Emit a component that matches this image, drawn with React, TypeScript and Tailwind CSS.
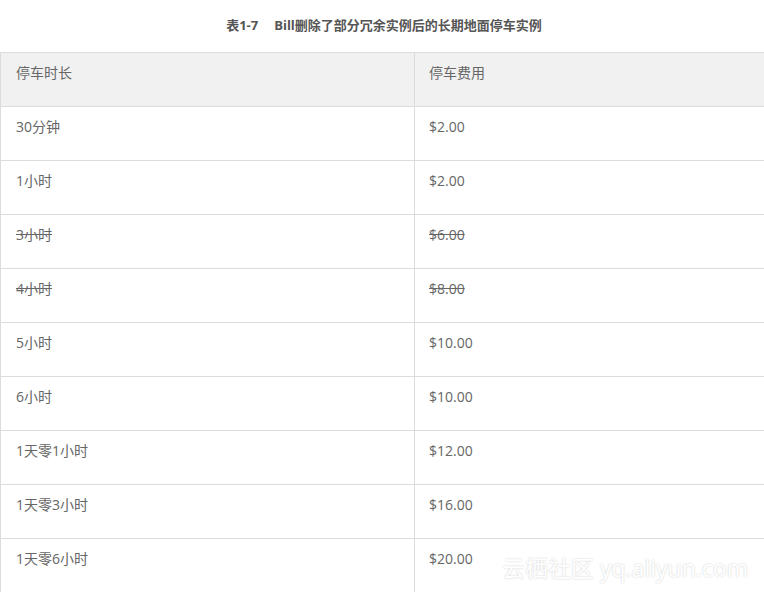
import React from 'react';

const rows: { time: string; fee: string; struck?: boolean }[] = [
  { time: '30分钟', fee: '$2.00' },
  { time: '1小时', fee: '$2.00' },
  { time: '3小时', fee: '$6.00', struck: true },
  { time: '4小时', fee: '$8.00', struck: true },
  { time: '5小时', fee: '$10.00' },
  { time: '6小时', fee: '$10.00' },
  { time: '1天零1小时', fee: '$12.00' },
  { time: '1天零3小时', fee: '$16.00' },
  { time: '1天零6小时', fee: '$20.00' },
];

const font = { fontFamily: '"Open Sans", "Noto Sans CJK SC", sans-serif' };

export default function App() {
  return (
    <div className="relative w-[764px] h-[593px] overflow-hidden bg-white text-[#666]" style={font}>
      <div className="h-[52px] flex items-center justify-center pb-[1px] pl-[4px]">
        <p className="text-[13px] font-bold text-[#555] leading-none">
          表1-7<span className="inline-block w-[16px]" />Bill删除了部分冗余实例后的长期地面停车实例
        </p>
      </div>

      <div className="grid grid-cols-[414px_414px] w-[828px] text-[14px] leading-[22px]">
        <div className="h-[54px] bg-[#f1f1f1] border-t border-l border-[#dcdcdc] pl-[15px] pt-[9px]">停车时长</div>
        <div className="h-[54px] bg-[#f1f1f1] border-t border-l border-[#dcdcdc] pl-[14px] pt-[9px]">停车费用</div>
        {rows.map((r, i) => (
          <React.Fragment key={i}>
            <div className="h-[54px] border-t border-l border-[#dcdcdc] pl-[15px] pt-[9px]">
              <span className={r.struck ? 'line-through' : ''}>{r.time}</span>
            </div>
            <div className="h-[54px] border-t border-l border-[#dcdcdc] pl-[14px] pt-[9px]">
              <span className={r.struck ? 'line-through' : ''}>{r.fee}</span>
            </div>
          </React.Fragment>
        ))}
      </div>

      {/* watermark */}
      <div
        className="absolute left-[502px] top-[553px] text-[23px] leading-[30px] text-white whitespace-nowrap"
        style={{ textShadow: '0 0 2px rgba(0,0,0,0.22)' }}
      >
        云栖社区 yq.aliyun.com
      </div>
    </div>
  );
}
